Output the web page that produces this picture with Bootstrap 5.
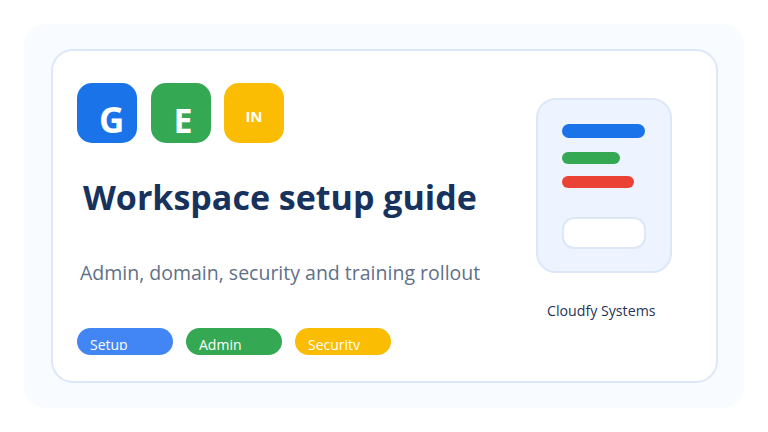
<!DOCTYPE html>
<html lang="en">

<head>
  <meta charset="UTF-8" />
  <meta name="viewport" content="width=device-width, initial-scale=1.0" />
  <title>Workspace setup guide</title>
  <link rel="stylesheet" href="https://cdn.jsdelivr.net/npm/bootstrap@5.3.3/dist/css/bootstrap.min.css" />
  <style>
    html, body { height: 432px; overflow: hidden; background: #fff; }
    body { padding: 24px; font-family: "Open Sans", "Noto Sans", sans-serif; }
    .outer-panel { width: 720px; height: 384px; padding: 25px 26px 25px 27px; background: #f8fbff; border-radius: 22px; }
    .main-panel { width: 667px; height: 334px; background: #fff; border: 2px solid #dce7f7; border-radius: 22px; padding: 32px 44.5px 0 24px; }
    .left-side { width: 430px; }
    .tile-row { gap: 13.5px; }
    .tile { width: 60px; height: 60px; border-radius: 15px; color: #fff; font-weight: 700; }
    .tile-g { background: #1a73e8; font-size: 35px; line-height: 48px; padding: 13px 0 0 22px; }
    .tile-e { background: #34a853; font-size: 34px; line-height: 48px; padding: 13px 0 0 5px; }
    .tile-in { background: #fbbc04; font-size: 15px; line-height: 60px; padding-top: 3px; }
    .guide-title { font-size: 34px; line-height: 48px; font-weight: 700; color: #17325c; margin: 30px 0 0 6px; white-space: nowrap; }
    .guide-sub { font-size: 19.5px; line-height: 28px; color: #5f7089; margin: 38px 0 0 3px; white-space: nowrap; }
    .tag-row { margin-top: 41px; gap: 13px; }
    .tag-pill { width: 96px; height: 27px; border-radius: 14px; color: #fff; font-size: 14px; padding: 7px 0 0 13px; }
    .tag-text { display: block; height: 15px; line-height: 20px; overflow: hidden; }
    .doc-tile { width: 135.5px; height: 175px; margin: 15px 0 0 0; background: #edf4ff; border: 2px solid #dce7f7; border-radius: 20px; padding: 24px; }
    .doc-bar { border-radius: 7px; }
    .bar-a { width: 83px; height: 14px; background: #1a73e8; }
    .bar-b { width: 58px; height: 12px; margin-top: 14px; background: #34a853; }
    .bar-c { width: 72px; height: 12px; margin-top: 12px; background: #ea4335; }
    .doc-box { width: 83.5px; height: 32px; margin-top: 29px; background: #fff; border: 2px solid #dce7f7; border-radius: 12px; }
    .company { font-size: 14.2px; line-height: 20px; color: #1f3558; margin: 28px 5px 0 0; white-space: nowrap; }
    .bg-setup { background: #4285f4; }
    .bg-admin { background: #34a853; }
    .bg-security { background: #fbbc04; }
  </style>
</head>

<body>
  <div class="outer-panel">
    <div class="main-panel d-flex justify-content-between">
      <div class="left-side">
        <div class="d-flex tile-row">
          <div class="tile tile-g">G</div>
          <div class="tile tile-e text-center">E</div>
          <div class="tile tile-in text-center">IN</div>
        </div>
        <h1 class="guide-title">Workspace setup guide</h1>
        <p class="guide-sub">Admin, domain, security and training rollout</p>
        <div class="d-flex tag-row">
          <div class="tag-pill bg-setup"><span class="tag-text">Setup</span></div>
          <div class="tag-pill bg-admin"><span class="tag-text">Admin</span></div>
          <div class="tag-pill bg-security"><span class="tag-text">Security</span></div>
        </div>
      </div>
      <div class="d-flex flex-column align-items-center">
        <div class="doc-tile">
          <div class="doc-bar bar-a"></div>
          <div class="doc-bar bar-b"></div>
          <div class="doc-bar bar-c"></div>
          <div class="doc-box"></div>
        </div>
        <div class="company">Cloudfy Systems</div>
      </div>
    </div>
  </div>

  <script src="https://cdn.jsdelivr.net/npm/bootstrap@5.3.3/dist/js/bootstrap.bundle.min.js"></script>
</body>

</html>
